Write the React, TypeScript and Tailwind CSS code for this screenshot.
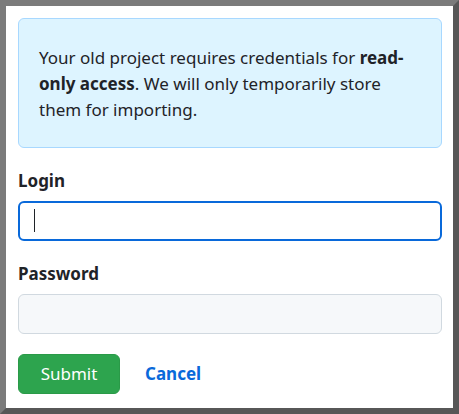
import React from "react";

export default function App() {
  return (
    <div
      className="w-[459px] h-[414px] border-[6px] border-t-[#7b7b7b] border-l-[#7b7b7b] border-r-[#575757] border-b-[#575757] bg-white text-[#1f2328]"
      style={{ fontFamily: '"Noto Sans", "Open Sans", sans-serif' }}
    >
      <div className="pt-3 pl-3 pr-[11px] pb-[15px] flex flex-col">
        <div className="rounded-md border border-[#a8d8ff] bg-[#ddf4ff] px-5 pt-[26px] pb-[24px] text-[17px] leading-[26px]">
          Your old project requires credentials for <b className="font-bold">read-only access</b>. We will only temporarily store them for importing.
        </div>

        <label className="mt-[21px] block text-[17px] leading-6 font-bold">Login</label>
        <div className="relative mt-2">
          <input
            type="text"
            className="block w-full h-10 rounded-md border-2 border-[#0969da] bg-white px-3 outline-none"
          />
          <span className="absolute left-4 top-2 h-[23px] w-px bg-[#1f2328]" />
        </div>

        <label className="mt-[21px] block text-[17px] leading-6 font-bold">Password</label>
        <input
          type="password"
          className="mt-2 block w-full h-10 rounded-md border border-[#d1d9e0] bg-[#f6f8fa] px-3 outline-none"
        />

        <div className="mt-5 flex items-center gap-[25px]">
          <button className="h-10 w-[102px] rounded-md border border-[#2a9a48] bg-[#2da44e] text-white text-[17px] font-normal">
            Submit
          </button>
          <a className="text-[#0969da] text-[17px] font-bold">Cancel</a>
        </div>
      </div>
    </div>
  );
}
